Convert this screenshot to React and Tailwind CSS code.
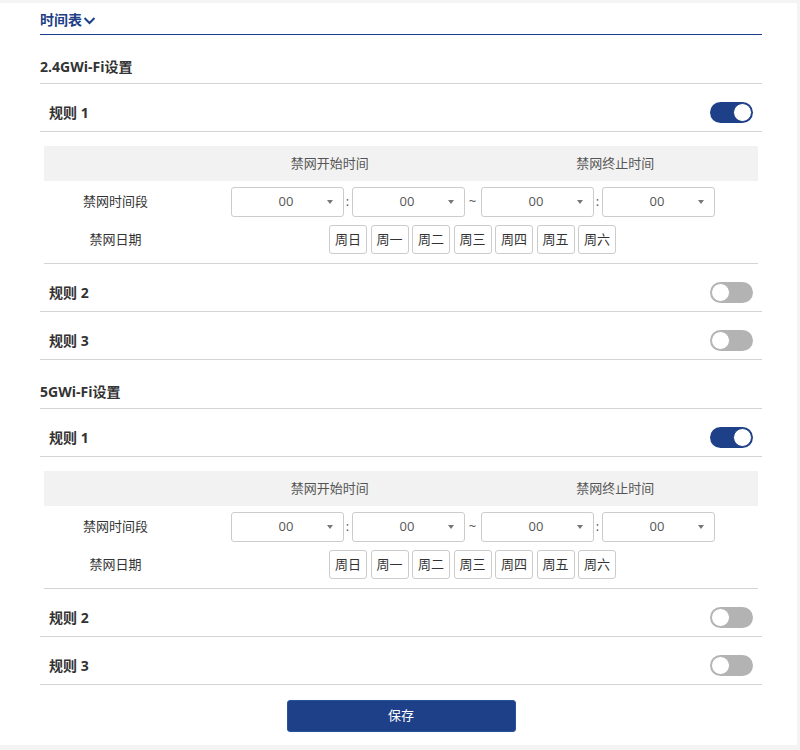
import React, { useState } from "react";

const font = { fontFamily: '"Open Sans", "Noto Sans CJK SC", sans-serif' };

const hours = ["00"];
const days = ["周日", "周一", "周二", "周三", "周四", "周五", "周六"];

const Toggle = ({ on, onChange }) => (
  <button
    onClick={onChange}
    className={`relative h-[21px] w-[43px] rounded-full ${on ? "bg-[#1e4088]" : "bg-[#b3b3b3]"}`}
  >
    <span
      className={`absolute top-[1px] h-[19px] w-[19px] rounded-full bg-white border ${
        on ? "right-[1px] border-[#1e4088]" : "left-[1px] border-[#b3b3b3]"
      }`}
    />
  </button>
);

const TimeSelect = () => (
  <div className="relative flex h-[30px] w-[113px] items-center justify-center rounded-[3px] border border-[#cccccc] bg-white text-[13px] text-[#555]">
    <span className="-ml-[2px]">{hours[0]}</span>
    <span className="absolute right-[10px] top-[12px] h-0 w-0 border-x-[3.5px] border-t-[4px] border-x-transparent border-t-[#777]" />
  </div>
);

const Sep = ({ ch, w }) => (
  <span className={`${w} text-center text-[13px] text-[#555]`}>{ch}</span>
);

const RuleDetail = () => (
  <div className="mx-[4px] border-b border-[#d4d4d4] pt-[14px]">
    <div className="grid h-[35px] grid-cols-[143px_1fr_1fr] items-center bg-[#f2f2f2] text-[13px] text-[#555]">
      <span />
      <span className="text-center">禁网开始时间</span>
      <span className="text-center">禁网终止时间</span>
    </div>
    <div className="flex h-[42px] items-center">
      <span className="w-[143px] text-center text-[13px] text-[#333]">禁网时间段</span>
      <div className="flex flex-1 items-center justify-center">
        <TimeSelect />
        <Sep ch=":" w="w-[8px]" />
        <TimeSelect />
        <Sep ch="~" w="w-[16px]" />
        <TimeSelect />
        <Sep ch=":" w="w-[8px]" />
        <TimeSelect />
      </div>
    </div>
    <div className="flex items-start pb-[9px] pt-[2px]">
      <span className="flex h-[29px] w-[143px] items-center justify-center text-[13px] text-[#333]">禁网日期</span>
      <div className="flex flex-1 justify-center gap-[3.5px]">
        {days.map((d) => (
          <button
            key={d}
            className="h-[29px] w-[38px] rounded-[3px] border border-[#cccccc] bg-white text-[13px] text-[#333]"
          >
            {d}
          </button>
        ))}
      </div>
    </div>
  </div>
);

const Band = ({ title, initial }) => {
  const [rules, setRules] = useState(initial);
  const flip = (i) => setRules(rules.map((r, j) => (j === i ? !r : r)));

  return (
    <div>
      <div className="border-b border-[#d4d4d4] pb-[6px] pt-[22px] text-[14px] font-bold leading-[20px] text-[#333]">
        {title}
      </div>
      {rules.map((on, i) => (
        <div key={i}>
          <div className="flex h-[48px] items-center justify-between border-b border-[#d4d4d4] px-[9px] pt-[10px]">
            <span className="text-[14px] font-bold text-[#333]">规则 {i + 1}</span>
            <Toggle on={on} onChange={() => flip(i)} />
          </div>
          {on && <RuleDetail />}
        </div>
      ))}
    </div>
  );
};

export default function App() {
  return (
    <div className="min-h-[750px] bg-[#f4f4f4] pt-[3px]" style={font}>
      <div className="h-[742px] w-[797px] bg-white px-[40px] pr-[35px]">
        <div className="flex h-[32px] items-center border-b border-[#1e4088] pt-[1px] text-[14px] font-bold text-[#1e4088]">
          时间表
          <svg width="13" height="9" viewBox="0 0 13 9" className="ml-[1px] mt-[2px]">
            <path d="M1.5 2 L6.5 7 L11.5 2" fill="none" stroke="#1e4088" strokeWidth="2" />
          </svg>
        </div>
        <Band title="2.4GWi-Fi设置" initial={[true, false, false]} />
        <Band title="5GWi-Fi设置" initial={[true, false, false]} />
        <div className="flex justify-center pt-[15px]">
          <button className="h-[32px] w-[229px] rounded-[3px] border border-[#2a5298] bg-[#1e4088] text-[13px] text-white">
            保存
          </button>
        </div>
      </div>
    </div>
  );
}
